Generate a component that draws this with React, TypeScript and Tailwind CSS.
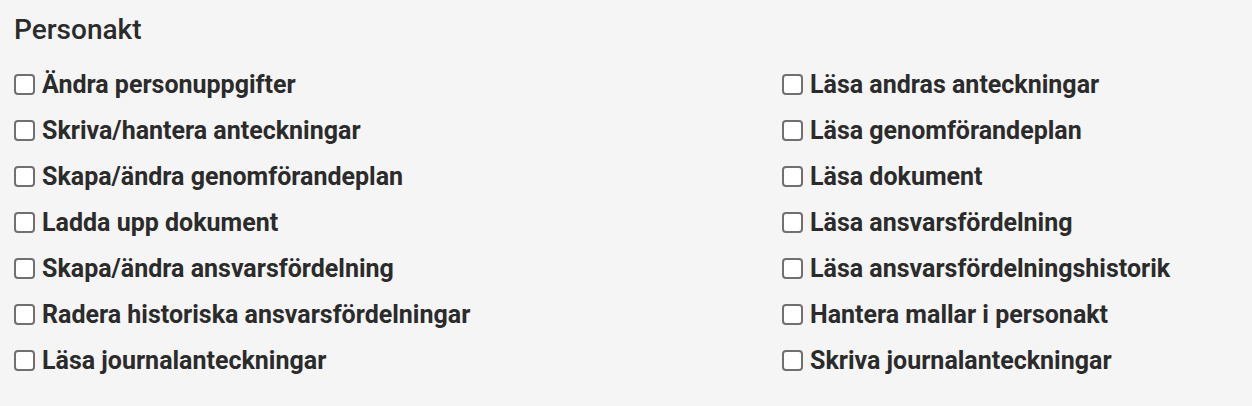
import React from 'react';

const leftItems = [
  'Ändra personuppgifter',
  'Skriva/hantera anteckningar',
  'Skapa/ändra genomförandeplan',
  'Ladda upp dokument',
  'Skapa/ändra ansvarsfördelning',
  'Radera historiska ansvarsfördelningar',
  'Läsa journalanteckningar',
];

const rightItems = [
  'Läsa andras anteckningar',
  'Läsa genomförandeplan',
  'Läsa dokument',
  'Läsa ansvarsfördelning',
  'Läsa ansvarsfördelningshistorik',
  'Hantera mallar i personakt',
  'Skriva journalanteckningar',
];

const CheckItem: React.FC<{ label: string }> = ({ label }) => (
  <label className="flex items-center h-[46px] cursor-pointer">
    <span className="w-[21px] h-[21px] rounded-[4px] border-2 border-[#707070] bg-white shrink-0" />
    <span className="ml-[7px] text-[25px] font-bold text-[#2b2b2b] leading-none">{label}</span>
  </label>
);

const App: React.FC = () => {
  return (
    <div
      className="w-[1252px] h-[406px] bg-[#f5f5f5] px-[14px] pt-[12px]"
      style={{ fontFamily: 'Roboto, "Noto Sans", sans-serif' }}
    >
      <h2 className="text-[28px] leading-[36px] text-[#2b2b2b] font-medium">Personakt</h2>
      <div className="grid grid-cols-[768px_1fr] mt-[13px]">
        <div className="flex flex-col">
          {leftItems.map((l) => (
            <CheckItem key={l} label={l} />
          ))}
        </div>
        <div className="flex flex-col">
          {rightItems.map((l) => (
            <CheckItem key={l} label={l} />
          ))}
        </div>
      </div>
    </div>
  );
};

export default App;
